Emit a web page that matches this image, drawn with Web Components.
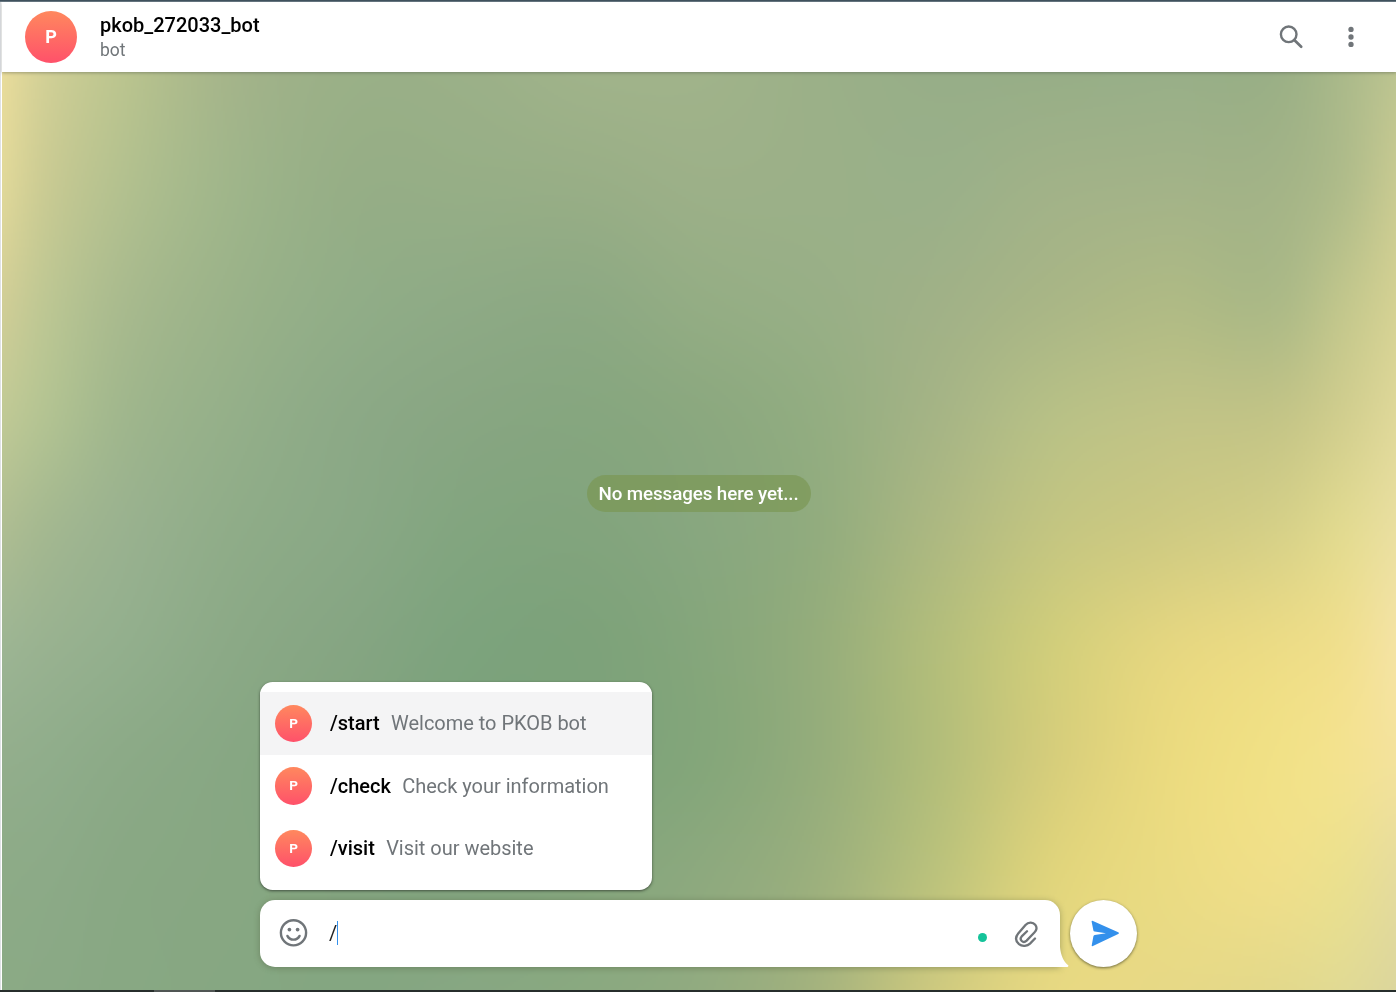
<!DOCTYPE html>
<html lang="en">
<head>
<meta charset="utf-8">
<title>pkob_272033_bot</title>
<style>
html,body{margin:0;height:100%;overflow:hidden}
body{font-family:Roboto,"Liberation Sans",sans-serif;color:#000}
</style>
</head>
<body>
<chat-app></chat-app>
<script>
const define = (name, html, setup) => {
  const template = document.createElement('template');
  template.innerHTML = html;
  customElements.define(name, class extends HTMLElement {
    constructor() {
      super();
      this.attachShadow({ mode: 'open' }).append(template.content.cloneNode(true));
    }
    connectedCallback() { if (setup) setup(this, this.shadowRoot); }
  });
};

define('peer-avatar', `
<style>
:host{display:flex;flex:none;align-items:center;justify-content:center;width:var(--size,52px);height:var(--size,52px);border-radius:50%;background:linear-gradient(#ff885e,#ff516a);color:#fff;font-weight:700;font-size:var(--letter,18px);line-height:1}
</style><slot></slot>`);

define('chat-header', `
<style>
:host{display:flex;align-items:center;height:70px;box-sizing:border-box;padding:0 31px 0 23px;background:#fff;box-shadow:0 1px 3px rgba(60,70,60,.4);position:relative;z-index:2}
.info{margin-left:23px;flex:1}
.name{font-size:20px;font-weight:500;line-height:24px;padding-bottom:2px}
.status{font-size:17.5px;line-height:23px;color:#707579}
svg{display:block}
.actions{display:flex;gap:32px}
</style>
<peer-avatar>P</peer-avatar>
<div class="info"><div class="name"><slot name="name"></slot></div><div class="status"><slot name="status"></slot></div></div>
<div class="actions">
<svg width="28" height="28" viewBox="0 0 28 28" fill="none" stroke="#707579" stroke-width="2.4"><circle cx="11.7" cy="11.3" r="7.8"/><path d="M17.3 17l6.9 6.8" stroke-width="2.7" stroke-linecap="round"/></svg>
<svg width="28" height="28" viewBox="0 0 28 28" fill="#707579"><circle cx="14" cy="6.4" r="2.65"/><circle cx="14" cy="14" r="2.65"/><circle cx="14" cy="21.4" r="2.65"/></svg>
</div>`);

/* Wallpaper: a mesh of colours, interpolated smoothly between the knots. */
const KNOTS = [0, 43, 116, 233, 349, 465, 582, 698, 814, 931, 1047, 1163, 1280, 1340, 1394];
const MESH = [
 'e9dc9b d2d096 bcc58f a4b48a 9ab087 9bb088 a0b38a a0b38a 9bb088 97ae88 97ae87 98af88 9bb086 aab98a bcc490',
 'e0d899 cacb93 b4c18f 9fb58a 96ae86 96ae86 98ae86 9cb088 9bb088 9ab089 a1b288 a3b388 a4b487 b0bc8a c8ca91',
 'd1ce96 bec793 aabb8e 9ab289 91ad87 8eaa85 8da983 94ad84 98af86 a0b187 a9b686 afba85 adba87 c1c68c d4d193',
 'c0c995 b3c392 a1b78d 94af89 8ca986 88a682 86a67f 8ba87f 93ad81 a5b485 b7c086 c0c386 c4c587 d1ce8e dfd899',
 'aebd92 a4b890 9ab28f 8fac88 89a885 82a57f 82a47d 88a77f 92ac7e acb881 c3c581 ceca82 d7d188 e2da90 eadfa0',
 '9db593 99b290 93af8d 8ba986 85a582 7da37d 7da27a 85a67b 95ad7b b2bd7b d0cd7b e4d680 ecdc86 f0df8e f4e3a3',
 '93ae8c 90ad8b 8caa87 87a783 82a47e 7ca27b 7ea37a 84a67a 95ad7b b2bd7a d5cd7b eada7f f1e187 f3e28f f3e29c',
 '8dab87 8caa87 89a884 87a782 84a580 82a47e 85a67d 8da97e 9cb07d bbc27c dfd47c eadb82 efdf8a ebe08f e6dc9c',
 '8baa85 8aa985 88a883 86a782 84a681 87a782 8aa980 92ab80 a5b37e cdc97f e6d882 e7d986 e3d98c e1da94 dcd69c'
].map(r => r.split(' ').map(c => [0, 2, 4].map(i => parseInt(c.slice(i, i + 2), 16))));
const ROWS = MESH.map((_, i) => i * 115);

/* Cubic Hermite through values v at positions p, with finite-difference tangents. */
const sample = (p, v, x) => {
  let i = 0;
  while (i < p.length - 2 && x > p[i + 1]) i++;
  const slope = k => (v[k + 1] - v[k]) / (p[k + 1] - p[k]);
  const tangent = k => k === 0 ? slope(0) : k === p.length - 1 ? slope(k - 1) : (slope(k - 1) + slope(k)) / 2;
  const h = p[i + 1] - p[i], t = (x - p[i]) / h, t2 = t * t, t3 = t2 * t;
  return (2 * t3 - 3 * t2 + 1) * v[i] + (t3 - 2 * t2 + t) * h * tangent(i) + (3 * t2 - 2 * t3) * v[i + 1] + (t3 - t2) * h * tangent(i + 1);
};

define('mesh-wallpaper', `
<style>:host{display:block}canvas{display:block;width:100%;height:100%}</style>
<canvas width="698" height="460"></canvas>`, (host, root) => {
  const cv = root.querySelector('canvas'), g = cv.getContext('2d'), W = cv.width, H = cv.height, im = g.createImageData(W, H);
  const columns = KNOTS.map((_, i) => [0, 1, 2].map(k => MESH.map(r => r[i][k])));
  for (let y = 0; y < H; y++) {
    const row = [0, 1, 2].map(k => columns.map(c => sample(ROWS, c[k], y / (H - 1) * 920)));
    for (let x = 0; x < W; x++) {
      const o = (y * W + x) * 4;
      for (let k = 0; k < 3; k++) im.data[o + k] = sample(KNOTS, row[k], x / (W - 1) * 1394);
      im.data[o + 3] = 255;
    }
  }
  g.putImageData(im, 0, 0);
});

define('empty-notice', `
<style>:host{display:block;box-sizing:border-box;width:224px;height:37px;border-radius:18.5px;background:rgba(122,151,82,.68);color:#fff;font-size:18.75px;font-weight:500;line-height:38px;text-align:center;white-space:nowrap;letter-spacing:-.08px;text-indent:-1px}</style><slot></slot>`);

define('command-item', `
<style>
:host{display:flex;align-items:center;height:62.6px;padding-left:15px;font-size:20px;white-space:nowrap}
:host([selected]){background:#f4f4f5}
peer-avatar{--size:37.3px;--letter:13.5px;margin-right:17.7px}
b{font-weight:500;margin-right:11.3px}
span{color:#707579;letter-spacing:-.02px}
b span{color:#000}
</style><peer-avatar>P</peer-avatar><b><slot name="cmd"></slot></b><span><slot></slot></span>`);

define('command-menu', `
<style>:host{display:block;box-sizing:border-box;width:392px;height:208px;padding:10px 0;border-radius:12.5px;background:#fff;overflow:hidden;box-shadow:0 1px 3px rgba(40,50,40,.75)}</style><slot></slot>`);

define('message-composer', `
<style>
:host{display:flex;align-items:flex-end;gap:10px;position:relative;width:877px}
.field{position:relative;display:flex;align-items:center;flex:1;height:67px;background:#fff;border-radius:15px 15px 0 15px;padding:0 19px;box-sizing:border-box;box-shadow:0 1px 6px rgba(70,80,50,.4)}
.tail{position:absolute;left:100%;bottom:0}
svg{display:block;flex:none}
.smile{margin-bottom:1px}
.text{display:flex;align-items:center;flex:1;margin:0 0 2px 21px;font-size:20px;color:#222}
.caret{width:1px;height:24px;background:#3390ec}
.dot{width:9px;height:9px;border-radius:50%;background:#15c39a;margin:8px 26px 0 0}
.send{display:flex;align-items:center;justify-content:center;width:67px;height:67px;border-radius:50%;background:#fff;box-shadow:0 1px 3px rgba(60,60,30,.7)}
.popup{position:absolute;left:0;bottom:77px}
</style>
<div class="popup"><slot></slot></div>
<div class="field">
<svg class="smile" width="29" height="30" viewBox="0 0 29 30" fill="none" stroke="#707579" stroke-width="2.4"><circle cx="14.5" cy="14.8" r="12.6"/><path d="M8.4 17.9c2.5 5 9.7 5 12.2 0" stroke-linecap="round"/><circle cx="10.4" cy="11.6" r="1.85" fill="#707579" stroke="none"/><circle cx="18.6" cy="11.6" r="1.85" fill="#707579" stroke="none"/></svg>
<div class="text"><span>/</span><i class="caret"></i></div>
<i class="dot"></i>
<svg width="28" height="30" viewBox="0 0 28 30" fill="none" stroke="#707579" stroke-width="2.3" stroke-linecap="round" stroke-linejoin="round"><path d="M22 19.5L17 24.6C14.5 27 9.3 28 6 25.2C2.4 22 2.4 18 5.2 14.6L12.5 6C14.3 4 15.8 3.6 17.8 3.7C21.5 3.9 24 7 23.4 10C23.2 11.4 22.6 12.3 21.6 13.3L13.6 21.6C10 25 5.9 20.6 8.7 17.4L14 12.2"/></svg>
<svg class="tail" width="9" height="20" viewBox="0 0 9 20"><path d="M0 0C.7 8 3.5 14.5 8.2 18.3 8.8 19 8.2 20 7.3 20H0z" fill="#fff"/></svg>
</div>
<div class="send"><svg width="30" height="30" viewBox="0 0 30 30" fill="#3390ec"><path d="M3.4 1.8L29.2 13.2Q30.8 14 29.2 14.9L3.4 27.2Q2.6 27.3 2.7 26.4L4.4 17.2Q4.6 16.2 5.7 16L17 14.3 5.7 12.6Q4.6 12.4 4.4 11.5L2.6 2.6Q2.6 1.7 3.4 1.8z"/></svg></div>`);

define('chat-app', `
<style>
:host{display:flex;flex-direction:column;height:992px;width:1396px;box-sizing:border-box;border-top:1px solid #40525e;background:#fff}
.edge{height:1px;background:#667782;flex:none}
.window{flex:1;display:flex;flex-direction:column;border-left:1px solid #dfe1e5;padding-left:1px}
main{flex:1;position:relative;display:flex;flex-direction:column;align-items:center}
mesh-wallpaper{position:absolute;inset:0 0 -1px 0}
.messages{position:relative;flex:1;display:flex;align-items:center;padding-top:15px}
message-composer{margin:0 1px 23px 0}
footer{display:flex;height:2px;background:#272e2c;position:relative}
footer i{margin-left:154px;width:61px;background:#505654}
</style>
<div class="edge"></div>
<div class="window">
<chat-header><span slot="name">pkob_272033_bot</span><span slot="status">bot</span></chat-header>
<main>
<mesh-wallpaper></mesh-wallpaper>
<div class="messages"><empty-notice>No messages here yet...</empty-notice></div>
<message-composer>
<command-menu>
<command-item selected><span slot="cmd">/start</span>Welcome to PKOB bot</command-item>
<command-item><span slot="cmd">/check</span>Check your information</command-item>
<command-item><span slot="cmd">/visit</span>Visit our website</command-item>
</command-menu>
</message-composer>
</main>
</div>
<footer><i></i></footer>`);
</script>
</body>
</html>
